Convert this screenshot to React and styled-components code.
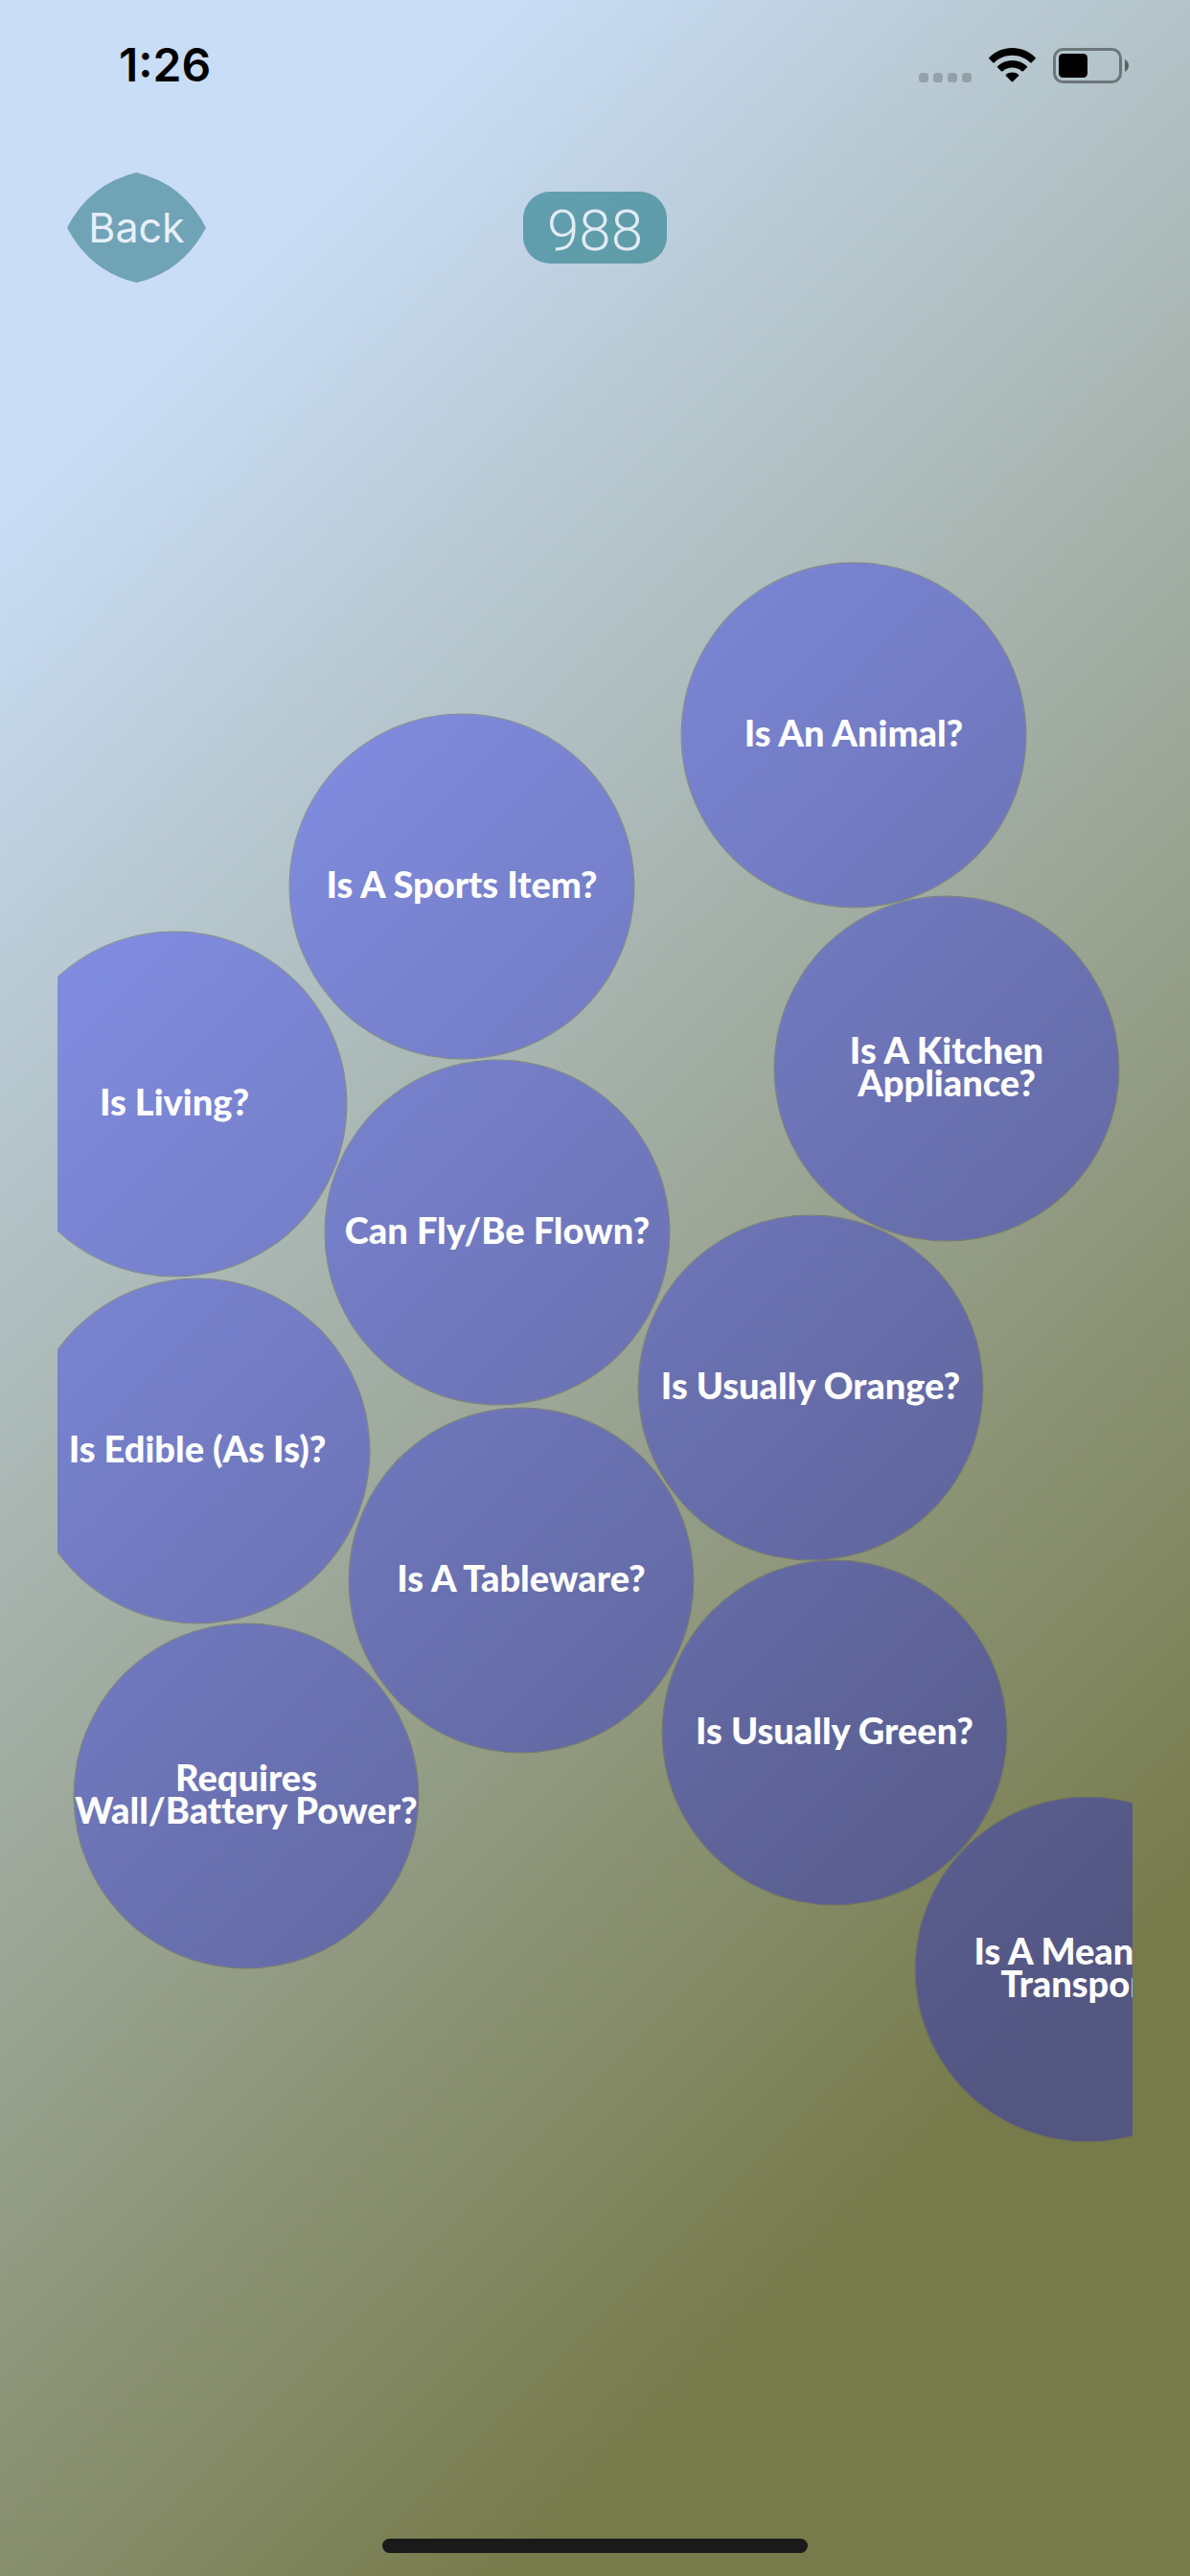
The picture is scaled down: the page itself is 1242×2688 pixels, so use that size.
import React from "react";
import styled, { createGlobalStyle } from "styled-components";

const GlobalStyle = createGlobalStyle`
  *, *::before, *::after { box-sizing: border-box; }
  html, body { margin: 0; }
  button { border: 0; margin: 0; padding: 0; background: none; cursor: pointer; }
`;

const Screen = styled.main`
  display: flex;
  flex-direction: column;
  min-height: 100vh;
  overflow: hidden;
  font-family: Inter, "Liberation Sans", sans-serif;
  background: linear-gradient(135deg, #c9ddf6 13.5%, #777b4b 82%);
`;

const StatusBar = styled.div`
  display: flex;
  align-items: center;
  justify-content: space-between;
  height: 132px;
  padding: 4px 64px 0 124px;
`;

const Time = styled.time`
  font-size: 48px;
  font-weight: 600;
  line-height: 56px;
  color: #000;
`;

const StatusIcons = styled.div`
  display: flex;
  align-items: center;
  gap: 18px;
`;

const Header = styled.header`
  display: grid;
  grid-template-columns: 1fr auto 1fr;
  align-items: center;
  height: 210px;
  padding: 0 70px;
`;

const BackButton = styled.button`
  display: grid;
  place-items: center;
  justify-self: start;
  width: 145px;
  height: 115px;
  font-family: inherit;
  font-size: 43px;
  font-weight: 400;
  line-height: 52px;
  color: #e6effb;

  > * {
    grid-area: 1 / 1;
  }
`;

const Score = styled.output`
  display: grid;
  place-items: center;
  width: 150px;
  height: 75px;
  padding-top: 6px;
  border-radius: 28px;
  background: rgba(0, 105, 118, 0.5);
  font-family: Roboto, "Liberation Sans", sans-serif;
  font-size: 60px;
  font-weight: 300;
  line-height: 69px;
  color: #e2ebf5;
`;

const Board = styled.section`
  position: relative;
  flex: 1;
  min-height: 2000px;
  margin: 0 60px;
  overflow: hidden;
`;

const Bubble = styled.button`
  position: absolute;
  left: ${(p) => p.$x}px;
  top: ${(p) => p.$y}px;
  display: flex;
  align-items: center;
  justify-content: center;
  width: 361px;
  height: 361px;
  padding-bottom: 8px;
  transform: translate(-50%, -50%);
  border: 1px solid rgba(100, 100, 100, 0.6);
  border-radius: 50%;
  background: rgba(0, 0, 255, 0.3) padding-box;
  font-family: Lato, "Liberation Sans", sans-serif;
  font-size: 38px;
  font-weight: 900;
  font-variant-ligatures: none;
  line-height: 34px;
  text-align: center;
  white-space: pre;
  color: #fff;
`;

const Footer = styled.footer`
  display: flex;
  align-items: flex-end;
  justify-content: center;
  height: 102px;
  padding-bottom: 24px;
`;

const HomeIndicator = styled.div`
  width: 444px;
  height: 15px;
  border-radius: 8px;
  background: #1a1a1a;
`;

const bubbles = [
  { x: 831, y: 425, label: "Is An Animal?" },
  { x: 422, y: 583, label: "Is A Sports Item?" },
  { x: 928, y: 773, label: "Is A Kitchen\nAppliance?" },
  { x: 122, y: 810, label: "Is Living?" },
  { x: 459, y: 944, label: "Can Fly/Be Flown?" },
  { x: 786, y: 1106, label: "Is Usually Orange?" },
  { x: 146, y: 1172, label: "Is Edible (As Is)?" },
  { x: 484, y: 1307, label: "Is A Tableware?" },
  { x: 811, y: 1466, label: "Is Usually Green?" },
  { x: 197, y: 1532, label: "Requires\nWall/Battery Power?" },
  { x: 1075, y: 1713, label: "Is A Means Of\nTransport?" },
];

const SignalIcon = () => (
  <svg width="55" height="37" viewBox="0 0 55 37" fill="#000" fillOpacity="0.2" aria-hidden="true">
    <rect x="0" y="26" width="10" height="10" rx="3.5" />
    <rect x="15" y="26" width="10" height="10" rx="3.5" />
    <rect x="30" y="26" width="10" height="10" rx="3.5" />
    <rect x="45" y="26" width="10" height="10" rx="3.5" />
  </svg>
);

const WifiIcon = () => (
  <svg width="49" height="37" viewBox="0 0 49 37" aria-hidden="true">
    <path d="M24.5 0C15.400 0 6.700 3.600 .4 9.900Q-.2 10.700 .5 11.500L4.300 15.300Q5 16 5.800 15.300C10.800 10.500 17.500 7.800 24.500 7.800S38.200 10.500 43.200 15.300Q44 16 44.700 15.300L48.500 11.500Q49.200 10.700 48.600 9.900C42.300 3.600 33.600 0 24.500 0Z" />
    <path d="M24.500 12.900C18.800 12.900 13.400 15.100 9.200 18.900Q8.500 19.600 9.200 20.400L13 24.200Q13.800 24.900 14.600 24.200C17.300 21.900 20.800 20.600 24.500 20.600S31.700 21.900 34.400 24.200Q35.200 24.900 36 24.200L39.800 20.400Q40.500 19.600 39.800 18.900C35.600 15.100 30.200 12.900 24.500 12.900Z" />
    <path d="M24.500 25.400C22.100 25.400 19.800 26.200 18 27.700Q17.300 28.400 18 29.200L23.700 35Q24.500 35.800 25.300 35L31 29.200Q31.700 28.400 31 27.700C29.200 26.200 26.900 25.400 24.500 25.400Z" />
  </svg>
);

const BatteryIcon = () => (
  <svg width="79" height="37" viewBox="0 0 79 37" aria-hidden="true">
    <rect x="1.500" y="1.500" width="69" height="34" rx="9" fill="none" stroke="#000" strokeOpacity="0.4" strokeWidth="3" />
    <rect x="6" y="6" width="30" height="25" rx="4.500" />
    <path d="M75 12C77.600 13.500 79 15.700 79 18.500S77.600 23.500 75 25Z" fillOpacity="0.5" />
  </svg>
);

const BackShape = () => (
  <svg width="145" height="115" viewBox="0 0 145 115" fill="#70a3b6" aria-hidden="true">
    <path d="M0 57.500Q24 11.600 72.500 0Q121 11.600 145 57.500Q121 103.400 72.500 115Q24 103.400 0 57.500Z" />
  </svg>
);

export default function App() {
  return (
    <Screen>
      <GlobalStyle />
      <StatusBar>
        <Time>1:26</Time>
        <StatusIcons>
          <SignalIcon />
          <WifiIcon />
          <BatteryIcon />
        </StatusIcons>
      </StatusBar>
      <Header>
        <BackButton type="button">
          <BackShape />
          <span>Back</span>
        </BackButton>
        <Score>988</Score>
      </Header>
      <Board>
        {bubbles.map((b) => (
          <Bubble key={b.label} type="button" $x={b.x} $y={b.y}>
            {b.label}
          </Bubble>
        ))}
      </Board>
      <Footer>
        <HomeIndicator />
      </Footer>
    </Screen>
  );
}
